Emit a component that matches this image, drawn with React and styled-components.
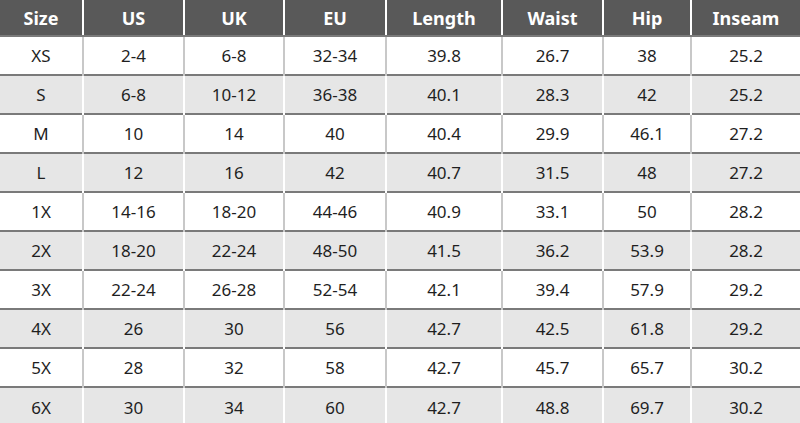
import React from 'react';
import styled, { createGlobalStyle } from 'styled-components';

const columns = [
    { label: 'Size', width: 83 },
    { label: 'US', width: 101 },
    { label: 'UK', width: 100 },
    { label: 'EU', width: 102 },
    { label: 'Length', width: 116 },
    { label: 'Waist', width: 101 },
    { label: 'Hip', width: 88 },
    { label: 'Inseam', width: 109 },
];

const rows = [
    ['XS', '2-4', '6-8', '32-34', '39.8', '26.7', '38', '25.2'],
    ['S', '6-8', '10-12', '36-38', '40.1', '28.3', '42', '25.2'],
    ['M', '10', '14', '40', '40.4', '29.9', '46.1', '27.2'],
    ['L', '12', '16', '42', '40.7', '31.5', '48', '27.2'],
    ['1X', '14-16', '18-20', '44-46', '40.9', '33.1', '50', '28.2'],
    ['2X', '18-20', '22-24', '48-50', '41.5', '36.2', '53.9', '28.2'],
    ['3X', '22-24', '26-28', '52-54', '42.1', '39.4', '57.9', '29.2'],
    ['4X', '26', '30', '56', '42.7', '42.5', '61.8', '29.2'],
    ['5X', '28', '32', '58', '42.7', '45.7', '65.7', '30.2'],
    ['6X', '30', '34', '60', '42.7', '48.8', '69.7', '30.2'],
];

const GlobalStyle = createGlobalStyle`
    html, body {
        margin: 0;
        padding: 0;
        background: #ffffff;
        overflow: hidden;
    }
`;

const App = () => {
    return (
        <>
            <GlobalStyle />
            <SizeTable>
                <colgroup>
                    {columns.map(col => (
                        <col key={col.label} style={{ width: col.width }} />
                    ))}
                </colgroup>
                <thead>
                    <tr>
                        {columns.map(col => (
                            <HeadCell key={col.label}>{col.label}</HeadCell>
                        ))}
                    </tr>
                </thead>
                <tbody>
                    {rows.map((row, i) => (
                        <Row key={row[0]} $shaded={i % 2 === 1}>
                            {row.map((value, j) => (
                                <Cell key={j}>{value}</Cell>
                            ))}
                        </Row>
                    ))}
                </tbody>
            </SizeTable>
        </>
    )
}

const SizeTable = styled.table`
    width: 800px;
    border-collapse: collapse;
    table-layout: fixed;
    font-family: "Noto Sans", "Open Sans", sans-serif;
`;

const HeadCell = styled.th`
    height: 35px;
    padding: 0;
    background: #595959;
    color: #ffffff;
    font-size: 18px;
    font-weight: 700;
    text-align: center;
    border-left: 2px solid #ffffff;
    border-bottom: 2px solid #7a7a7a;

    &:first-child {
        border-left: none;
    }
`;

const Row = styled.tr`
    height: 39px;
    background: ${props => props.$shaded ? '#e6e6e6' : '#ffffff'};
    border-top: 2px solid #7a7a7a;

    td {
        border-left-color: ${props => props.$shaded ? '#ffffff' : '#c8c8c8'};
    }
`;

const Cell = styled.td`
    padding: 0;
    color: #1f1f1f;
    font-size: 17px;
    text-align: center;
    border-left: 2px solid;

    &:first-child {
        border-left: none;
    }
`;

export default App;
